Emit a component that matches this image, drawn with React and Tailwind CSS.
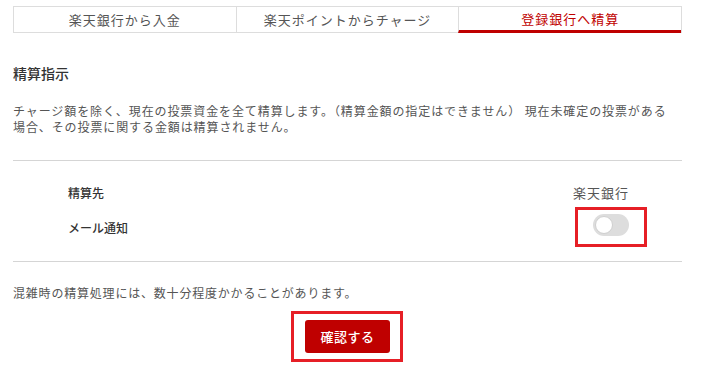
import React from 'react';

const font = { fontFamily: '"Noto Sans CJK JP", "Noto Sans", sans-serif' };

const tabs = [
  { label: '楽天銀行から入金', active: false },
  { label: '楽天ポイントからチャージ', active: false },
  { label: '登録銀行へ精算', active: true },
];

const App = () => {
  return (
    <div className="w-[710px] h-[375px] bg-white overflow-hidden" style={font}>
      <div className="ml-[13px] w-[669px] pt-[6px]">
        {/* Tabs */}
        <div className="flex border border-[#dddddd] h-[27px]">
          {tabs.map((t, i) => (
            <div
              key={t.label}
              className={`flex-1 flex items-center justify-center text-[13px] tracking-[1px] ${
                i > 0 ? 'border-l border-[#dddddd]' : ''
              } ${t.active ? 'text-[#bf0000] border-b-[3px] border-b-[#bf0000] -mb-px' : 'text-[#555555]'}`}
            >
              {t.label}
            </div>
          ))}
        </div>

        {/* Heading */}
        <h2 className="mt-[30px] text-[14px] leading-[20px] font-medium text-[#333333]">精算指示</h2>

        <p className="mt-[20px] text-[12px] leading-[16px] tracking-[0.9px] text-[#555555] whitespace-nowrap">
          チャージ額を除く、現在の投票資金を全て精算します。（精算金額の指定はできません） 現在未確定の投票がある
          <br />
          場合、その投票に関する金額は精算されません。
        </p>

        {/* Settings rows */}
        <div className="mt-[25px] border-t border-b border-[#d5d5d5] pt-[22px] pb-[23px] pl-[55px] pr-[53px]">
          <div className="flex justify-between items-center h-[20px]">
            <span className="text-[12px] font-medium text-[#333333]">精算先</span>
            <span className="text-[13px] tracking-[1px] text-[#555555]">楽天銀行</span>
          </div>
          <div className="flex justify-between items-start mt-[11px]">
            <span className="mt-[4px] text-[12px] leading-[20px] font-medium text-[#333333]">メール通知</span>
            <div className="relative">
              <div className="w-[36px] h-[22px] rounded-full bg-[#dddddd] flex items-center px-[2px]">
                <div className="w-[18px] h-[18px] rounded-full bg-white border border-[#cfcfcf]" />
              </div>
              <div className="absolute -left-[18px] -top-[7px] w-[72px] h-[40px] border-[3px] border-[#e61f26]" />
            </div>
          </div>
        </div>

        <p className="mt-[21px] text-[12px] leading-[20px] tracking-[0.8px] text-[#555555]">
          混雑時の精算処理には、数十分程度かかることがあります。
        </p>

        <div className="flex justify-center mt-[17px]">
          <div className="relative">
            <button className="w-[85px] h-[33px] rounded-[3px] bg-[#bf0000] text-white text-[13px] font-medium tracking-[0.5px]">
              確認する
            </button>
            <div className="absolute -left-[14px] -top-[9px] w-[112px] h-[51px] border-[3px] border-[#e61f26]" />
          </div>
        </div>
      </div>
    </div>
  );
};

export default App;
